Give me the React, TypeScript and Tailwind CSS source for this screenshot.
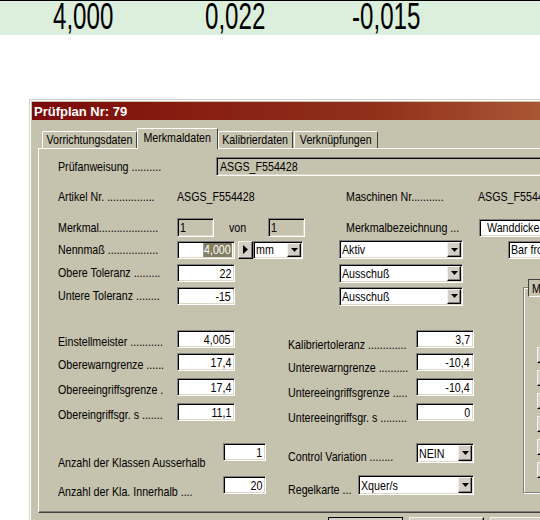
import React from 'react';

// Prüfplan-Fenster, Reiter "Merkmaldaten"

const font = "font-['Liberation_Sans',Arial,sans-serif]";
const sunken =
  'border border-t-[#808080] border-l-[#808080] border-r-white border-b-white shadow-[inset_1px_1px_0_#000,inset_-1px_-1px_0_#dcd8c8]';
const raised =
  'border border-t-[#f4f2ea] border-l-[#f4f2ea] border-r-black border-b-black shadow-[inset_-1px_-1px_0_#808080]';

// schmale Schrift (Arial Narrow) über horizontale Stauchung
const T = ({ children, o = 'l' }: { children: React.ReactNode; o?: 'l' | 'r' | 'c' }) => (
  <span
    className={`inline-block whitespace-nowrap scale-x-[0.82] ${
      o === 'l' ? 'origin-left' : o === 'r' ? 'origin-right' : 'origin-center'
    }`}
  >
    {children}
  </span>
);

const DownArrow = () => (
  <svg width="7" height="4" viewBox="0 0 7 4">
    <path d="M0 0h7L3.5 4z" fill="#000" />
  </svg>
);

const RightArrow = () => (
  <svg width="5" height="9" viewBox="0 0 5 9">
    <path d="M0 0l5 4.5L0 9z" fill="#000" />
  </svg>
);

type BoxProps = { value: string; className: string; align?: 'left' | 'right' };

const Field = ({ value, className, align = 'right' }: BoxProps) => (
  <div
    className={`${className} ${sunken} flex items-center overflow-hidden whitespace-nowrap leading-none ${
      align === 'right' ? 'justify-end pr-[3px]' : 'pl-[2px]'
    }`}
  >
    <T o={align === 'right' ? 'r' : 'l'}>{value}</T>
  </div>
);

const Select = ({ value, className }: { value: string; className: string }) => (
  <div className={`${className} ${sunken} bg-white flex items-stretch p-[1px]`}>
    <span className="flex-1 pl-[1px] flex items-center leading-none whitespace-nowrap overflow-hidden">
      <T>{value}</T>
    </span>
    <span className={`w-[14px] bg-[#d4d0c8] ${raised} flex items-center justify-center`}>
      <DownArrow />
    </span>
  </div>
);

const Tab = ({ label, className, active = false }: { label: string; className: string; active?: boolean }) => (
  <div
    className={`${className} flex items-center justify-center rounded-t-[2px] border-t border-l border-r border-t-white border-l-white border-r-[#404040] bg-[#c5c2ad] ${
      active ? 'h-[21px] -mb-[1px] relative z-10 pb-[3px]' : 'h-[17px]'
    }`}
  >
    <T o="c">{label}</T>
  </div>
);

const lowerRows = [
  { l: 'Einstellmeister ...........', lv: '4,005', r: 'Kalibriertoleranz .............', rv: '3,7', mt: 'mt-[24px]' },
  { l: 'Oberewarngrenze ......', lv: '17,4', r: 'Unterewarngrenze ..........', rv: '-10,4', mt: 'mt-[5px]' },
  { l: 'Obereeingriffsgrenze .', lv: '17,4', r: 'Untereeingriffsgrenze .....', rv: '-10,4', mt: 'mt-[7px]' },
  { l: 'Obereingriffsgr. s .......', lv: '11,1', r: 'Untereeingriffsgr. s .........', rv: '0', mt: 'mt-[7px]' },
];

const Big = ({ children }: { children: React.ReactNode }) => (
  <div className="text-[36px] leading-[34px] -mt-[1px] origin-left scale-x-[0.67] whitespace-nowrap">{children}</div>
);

export default function App() {
  return (
    <div className={`w-[540px] h-[520px] overflow-hidden bg-white text-black ${font} text-[13px]`}>
      {/* Messwerte */}
      <div className="h-[35px] bg-[#dcefdc] border-t border-black flex items-start">
        <div className="w-[205px] pl-[53px]">
          <Big>4,000</Big>
        </div>
        <div className="w-[147px]">
          <Big>0,022</Big>
        </div>
        <div className="flex-1">
          <Big>-0,015</Big>
        </div>
      </div>

      {/* Fenster */}
      <div className="ml-[29px] mt-[64px] w-[700px] border-t border-l border-[#d4d0c8]">
        <div className="border-t border-l border-white bg-[#c5c2ad] p-[1px]">
          <div className="h-[18px] bg-gradient-to-r from-[#7c0808] via-[#92301c] to-[#c08050] flex items-center pl-[2px]">
            <span className="font-bold text-[13px] text-white leading-none">Prüfplan Nr: 79</span>
          </div>

          {/* Reiter */}
          <div className="mt-[8px] ml-[6px] h-[20px] pl-[4px] flex items-end">
            <Tab label="Vorrichtungsdaten" className="w-[95px]" />
            <Tab label="Merkmaldaten" className="w-[81px]" active />
            <Tab label="Kalibrierdaten" className="w-[75px]" />
            <Tab label="Verknüpfungen" className="w-[84px] ml-[1px]" />
          </div>

          {/* Reiterinhalt */}
          <div className="ml-[6px] h-[365px] border-t border-l border-white border-b border-b-[#404040] shadow-[inset_0_-1px_0_#808080] pt-[8px] overflow-hidden">
            <div className="flex items-center h-[19px]">
              <div className="w-[177px] pl-[19px]">
                <T>Prüfanweisung ..........</T>
              </div>
              <Field value="ASGS_F554428" align="left" className="flex-1 h-[19px] pl-[3px]" />
            </div>

            <div className="flex items-center h-[16px] mt-[13px]">
              <div className="w-[138px] pl-[19px]">
                <T>Artikel Nr. ................</T>
              </div>
              <div className="w-[169px]">
                <T>ASGS_F554428</T>
              </div>
              <div className="w-[132px]">
                <T>Maschinen Nr...........</T>
              </div>
              <div>
                <T>ASGS_F554428</T>
              </div>
            </div>

            <div className="flex items-center h-[19px] mt-[13px]">
              <div className="w-[138px] pl-[19px]">
                <T>Merkmal....................</T>
              </div>
              <Field value="1" align="left" className="w-[37px] h-[19px]" />
              <div className="w-[54px] pl-[15px]">
                <T>von</T>
              </div>
              <Field value="1" align="left" className="w-[37px] h-[19px]" />
              <div className="w-[41px]" />
              <div className="w-[133px]">
                <T>Merkmalbezeichnung ...</T>
              </div>
              <Field value="Wanddicke" align="left" className="w-[100px] h-[18px] bg-white pl-[7px]" />
            </div>

            <div className="flex items-center h-[19px] mt-[3px]">
              <div className="w-[138px] pl-[19px]">
                <T>Nennmaß .................</T>
              </div>
              <div className={`w-[58px] h-[18px] ${sunken} bg-white flex items-center justify-end pr-[2px] leading-none`}>
                <span className="inline-block origin-right scale-x-[0.82] bg-[#847f64] text-white px-[1px] h-[14px] leading-[14px]">
                  4,000
                </span>
              </div>
              <div className={`ml-[3px] w-[15px] h-[18px] bg-[#d4d0c8] ${raised} flex items-center justify-center`}>
                <RightArrow />
              </div>
              <Select value="mm" className="w-[50px] h-[18px]" />
              <Select value="Aktiv" className="ml-[36px] w-[124px] h-[19px]" />
              <Field value="Bar from ..." align="left" className="ml-[45px] w-[60px] h-[18px] bg-white" />
            </div>

            <div className="flex mt-[4px]">
              <div className="w-[484px]">
                <div className="flex items-center h-[20px]">
                  <div className="w-[138px] pl-[19px]">
                    <T>Obere Toleranz .........</T>
                  </div>
                  <Field value="22" className="w-[58px] h-[18px] bg-white" />
                  <Select value="Ausschuß" className="ml-[104px] w-[124px] h-[19px]" />
                </div>
                <div className="flex items-center h-[20px] mt-[3px]">
                  <div className="w-[138px] pl-[19px]">
                    <T>Untere Toleranz ........</T>
                  </div>
                  <Field value="-15" className="w-[58px] h-[18px] bg-white" />
                  <Select value="Ausschuß" className="ml-[104px] w-[124px] h-[19px]" />
                </div>

                {lowerRows.map((r) => (
                  <div key={r.l} className={`flex items-start h-[18px] ${r.mt}`}>
                    <div className="w-[138px] pl-[19px] mt-[4px] leading-[16px]">
                      <T>{r.l}</T>
                    </div>
                    <Field value={r.lv} className="w-[58px] h-[18px] bg-white" />
                    <div className="w-[53px]" />
                    <div className="w-[128px] mt-[7px] leading-[16px]">
                      <T>{r.r}</T>
                    </div>
                    <Field value={r.rv} className="w-[58px] h-[18px] bg-white" />
                  </div>
                ))}

                <div className="flex items-start h-[20px] mt-[22px]">
                  <div className="w-[184px] pl-[19px] mt-[12px] leading-[16px]">
                    <T>Anzahl der Klassen Ausserhalb</T>
                  </div>
                  <Field value="1" className="w-[43px] h-[18px] bg-white" />
                  <div className="w-[22px]" />
                  <div className="w-[128px] mt-[6px] leading-[16px]">
                    <T>Control Variation ........</T>
                  </div>
                  <Select value="NEIN" className="w-[58px] h-[20px]" />
                </div>
                <div className="flex items-start h-[20px] mt-[12px]">
                  <div className="w-[184px] pl-[19px] mt-[9px] leading-[16px]">
                    <T>Anzahl der Kla. Innerhalb ....</T>
                  </div>
                  <Field value="20" className="w-[43px] h-[18px] mt-[1px] bg-white" />
                  <div className="w-[22px]" />
                  <div className="w-[70px] mt-[7px] leading-[16px]">
                    <T>Regelkarte ...</T>
                  </div>
                  <Select value="Xquer/s" className="w-[116px] h-[20px]" />
                </div>
              </div>

              {/* Gruppenrahmen rechts */}
              <div className="relative mt-[24px] w-[100px] h-[206px] border border-[#808080] shadow-[inset_1px_1px_0_#fff,1px_1px_0_#fff]">
                <div className="absolute -top-[9px] left-[4px] h-[18px] px-[3px] bg-[#c5c2ad] border border-[#404040] border-r-white border-b-white flex items-center leading-none">
                  <T>Messwerte</T>
                </div>
                <div className="ml-[13px] mt-[59px] flex flex-col gap-[7px]">
                  {[0, 1, 2, 3, 4, 5].map((i) => (
                    <div key={i} className={`w-[40px] h-[16px] bg-[#d4d0c8] ${raised}`} />
                  ))}
                </div>
              </div>
            </div>
          </div>

          {/* Schaltflächen */}
          <div className="flex pl-[296px] pt-[4px] gap-[6px]">
            <div className="w-[75px] h-[24px] border border-black bg-[#d4d0c8]" />
            <div className={`w-[75px] h-[24px] bg-[#d4d0c8] ${raised}`} />
            <div className={`w-[75px] h-[24px] bg-[#d4d0c8] ${raised}`} />
          </div>
        </div>
      </div>
    </div>
  );
}
